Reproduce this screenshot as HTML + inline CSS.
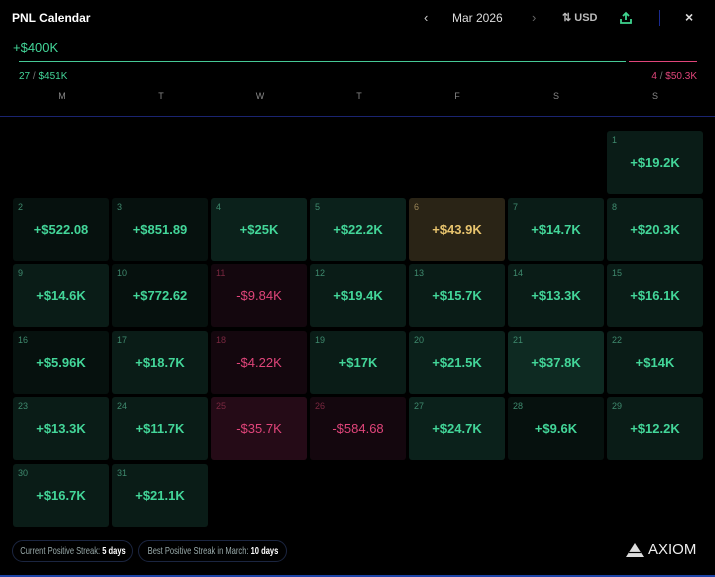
<!DOCTYPE html><html><head><meta charset="utf-8"><style>
*{margin:0;padding:0;box-sizing:border-box}
body{width:715px;height:577px;background:#000;font-family:"Liberation Sans",sans-serif;position:relative;overflow:hidden;color:#fff}
.a{position:absolute}
.c{position:absolute;width:96px;height:63px;border-radius:3px;background:#0a1d18}
.c .d{position:absolute;left:5px;top:4px;font-size:9px;color:#3f8a6e}
.c .v{position:absolute;left:0;right:0;top:24px;text-align:center;font-size:13px;font-weight:bold;color:#43d699}
.l{background:#06110e}.m{background:#0a1c17}.h{background:#0b211b}.x{background:#0e2a22}
.r{background:#14070e}.rr{background:#250b17}
.r .d,.rr .d{color:#7a2840}.r .v,.rr .v{color:#e0457a;font-weight:normal}
.y{background:#2a2416}.y .d{color:#9a8558}.y .v{color:#e8c46e}
.w{position:absolute;top:91px;font-size:9px;color:#888;width:20px;text-align:center}
.p{position:absolute;top:540px;height:22px;border:1px solid #1b2540;border-radius:11px;font-size:10.5px;color:#9aa;line-height:20px;white-space:nowrap}
.p span{position:absolute;left:50%;top:0;transform:translateX(-50%) scaleX(.72);white-space:nowrap}
.p b{color:#fff}
</style></head><body>
<div class="a" style="left:12px;top:11px;font-size:12px;font-weight:bold">PNL Calendar</div>
<div class="a" style="left:424px;top:10px;font-size:13px;color:#ccc">‹</div>
<div class="a" style="left:452px;top:11px;font-size:12px;color:#ddd">Mar 2026</div>
<div class="a" style="left:532px;top:10px;font-size:13px;color:#666">›</div>
<div class="a" style="left:562px;top:11px;font-size:11px;color:#bbb;font-weight:bold">⇅ USD</div>
<svg class="a" style="left:619px;top:11px" width="14" height="14" viewBox="0 0 14 14" fill="none" stroke="#3fd48f" stroke-width="1.8"><path d="M7 9V2M4 5l3-3 3 3M2 8v4h10V8"/></svg>
<div class="a" style="left:659px;top:10px;width:1px;height:16px;background:#1a2a90"></div>
<div class="a" style="left:685px;top:9px;font-size:14px;color:#ddd;font-weight:bold">×</div>
<div class="a" style="left:13px;top:40px;font-size:13px;color:#43d699">+$400K</div>
<div class="a" style="left:19px;top:61px;width:607px;height:1px;background:#46c996"></div>
<div class="a" style="left:629px;top:61px;width:68px;height:1px;background:#e0457a"></div>
<div class="a" style="left:19px;top:71px;font-size:10px;color:#43d699">27 <span style="color:#777">/</span> $451K</div>
<div class="a" style="left:629px;top:71px;width:68px;text-align:right;font-size:10px;color:#e0457a">4 <span style="color:#777">/</span> $50.3K</div>
<div class="w" style="left:52px">M</div><div class="w" style="left:151px">T</div><div class="w" style="left:250px">W</div><div class="w" style="left:349px">T</div><div class="w" style="left:447px">F</div><div class="w" style="left:546px">S</div><div class="w" style="left:645px">S</div>
<div class="a" style="left:0;top:116px;width:715px;height:1px;background:#1a2470"></div>
<div class="c m" style="left:607px;top:131px"><span class="d">1</span><div class="v">+$19.2K</div></div>
<div class="c l" style="left:13px;top:198px"><span class="d">2</span><div class="v">+$522.08</div></div>
<div class="c l" style="left:112px;top:198px"><span class="d">3</span><div class="v">+$851.89</div></div>
<div class="c h" style="left:211px;top:198px"><span class="d">4</span><div class="v">+$25K</div></div>
<div class="c h" style="left:310px;top:198px"><span class="d">5</span><div class="v">+$22.2K</div></div>
<div class="c y" style="left:409px;top:198px"><span class="d">6</span><div class="v">+$43.9K</div></div>
<div class="c m" style="left:508px;top:198px"><span class="d">7</span><div class="v">+$14.7K</div></div>
<div class="c m" style="left:607px;top:198px"><span class="d">8</span><div class="v">+$20.3K</div></div>
<div class="c m" style="left:13px;top:264px"><span class="d">9</span><div class="v">+$14.6K</div></div>
<div class="c l" style="left:112px;top:264px"><span class="d">10</span><div class="v">+$772.62</div></div>
<div class="c r" style="left:211px;top:264px"><span class="d">11</span><div class="v">-$9.84K</div></div>
<div class="c m" style="left:310px;top:264px"><span class="d">12</span><div class="v">+$19.4K</div></div>
<div class="c m" style="left:409px;top:264px"><span class="d">13</span><div class="v">+$15.7K</div></div>
<div class="c m" style="left:508px;top:264px"><span class="d">14</span><div class="v">+$13.3K</div></div>
<div class="c m" style="left:607px;top:264px"><span class="d">15</span><div class="v">+$16.1K</div></div>
<div class="c l" style="left:13px;top:331px"><span class="d">16</span><div class="v">+$5.96K</div></div>
<div class="c m" style="left:112px;top:331px"><span class="d">17</span><div class="v">+$18.7K</div></div>
<div class="c r" style="left:211px;top:331px"><span class="d">18</span><div class="v">-$4.22K</div></div>
<div class="c m" style="left:310px;top:331px"><span class="d">19</span><div class="v">+$17K</div></div>
<div class="c h" style="left:409px;top:331px"><span class="d">20</span><div class="v">+$21.5K</div></div>
<div class="c x" style="left:508px;top:331px"><span class="d">21</span><div class="v">+$37.8K</div></div>
<div class="c m" style="left:607px;top:331px"><span class="d">22</span><div class="v">+$14K</div></div>
<div class="c m" style="left:13px;top:397px"><span class="d">23</span><div class="v">+$13.3K</div></div>
<div class="c m" style="left:112px;top:397px"><span class="d">24</span><div class="v">+$11.7K</div></div>
<div class="c rr" style="left:211px;top:397px"><span class="d">25</span><div class="v">-$35.7K</div></div>
<div class="c r" style="left:310px;top:397px"><span class="d">26</span><div class="v">-$584.68</div></div>
<div class="c h" style="left:409px;top:397px"><span class="d">27</span><div class="v">+$24.7K</div></div>
<div class="c l" style="left:508px;top:397px"><span class="d">28</span><div class="v">+$9.6K</div></div>
<div class="c m" style="left:607px;top:397px"><span class="d">29</span><div class="v">+$12.2K</div></div>
<div class="c m" style="left:13px;top:464px"><span class="d">30</span><div class="v">+$16.7K</div></div>
<div class="c m" style="left:112px;top:464px"><span class="d">31</span><div class="v">+$21.1K</div></div>
<div class="p" style="left:12px;width:121px"><span>Current Positive Streak: <b>5 days</b></span></div>
<div class="p" style="left:138px;width:149px"><span>Best Positive Streak in March: <b>10 days</b></span></div>
<svg class="a" style="left:626px;top:543px" width="18" height="14" viewBox="0 0 18 14"><path d="M9 0L18 14H0Z" fill="#ddd"/><path d="M3 9.5h12" stroke="#000" stroke-width="1.2"/></svg>
<div class="a" style="left:648px;top:541px;font-size:15px;color:#eee">AXIOM</div>
<div class="a" style="left:0;top:575px;width:715px;height:2px;background:#1d44a8"></div>
</body></html>
